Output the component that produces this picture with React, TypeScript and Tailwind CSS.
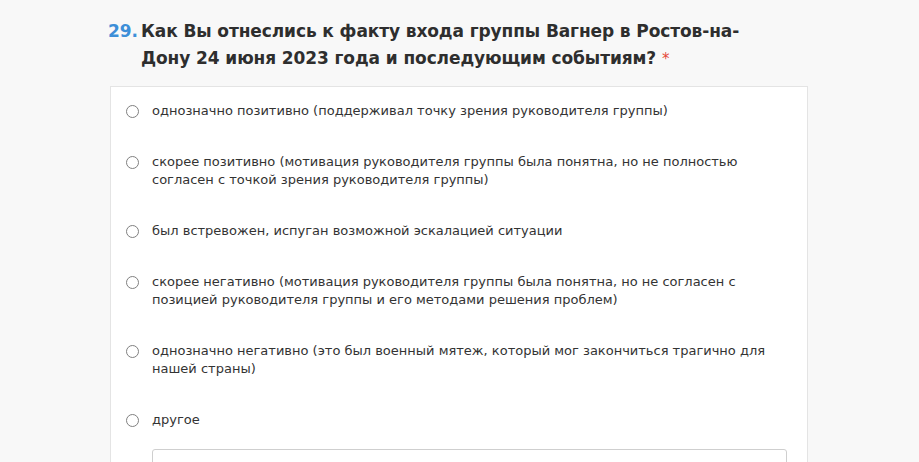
import React from "react";

const options = [
  "однозначно позитивно (поддерживал точку зрения руководителя группы)",
  "скорее позитивно (мотивация руководителя группы была понятна, но не полностью согласен с точкой зрения руководителя группы)",
  "был встревожен, испуган возможной эскалацией ситуации",
  "скорее негативно (мотивация руководителя группы была понятна, но не согласен с позицией руководителя группы и его методами решения проблем)",
  "однозначно негативно (это был военный мятеж, который мог закончиться трагично для нашей страны)",
  "другое",
];

function Radio() {
  return (
    <span className="mt-[3px] h-[13px] w-[13px] shrink-0 rounded-full border border-[#808080] bg-white" />
  );
}

export default function App() {
  return (
    <div
      className="min-h-[462px] w-full overflow-hidden bg-[#f8f8f8]"
      style={{ fontFamily: '"DejaVu Sans", sans-serif' }}
    >
      <div className="ml-[108px] w-[700px] pt-[18px]">
        {/* Title */}
        <div className="flex text-[17px] font-bold leading-[27px] tracking-[-0.1px] text-[#2e2e2e]">
          <span className="w-[33px] shrink-0 text-[#3d8fd8]">29.</span>
          <h2 className="w-[610px]">
            Как Вы отнеслись к факту входа группы Вагнер в Ростов-на-Дону 24 июня 2023 года и последующим событиям?
            <span className="ml-[6px] text-[15px] font-normal leading-none text-[#e5493a]">*</span>
          </h2>
        </div>

        {/* Card */}
        <div className="ml-[2px] mt-[14px] border border-[#e4e4e4] bg-white pl-[15px] pr-[22px] pt-[15px]">
          <div className="flex flex-col gap-[33px]">
            {options.map((o) => (
              <label key={o} className="flex items-start gap-[13px] text-[13px] leading-[18px] text-[#333]">
                <Radio />
                <span className="max-w-[640px]">{o}</span>
              </label>
            ))}
          </div>
          <div className="ml-[26px] mt-[20px] h-[40px] w-[635px] rounded-[3px] border border-[#cfcfcf]" />
        </div>
      </div>
    </div>
  );
}
